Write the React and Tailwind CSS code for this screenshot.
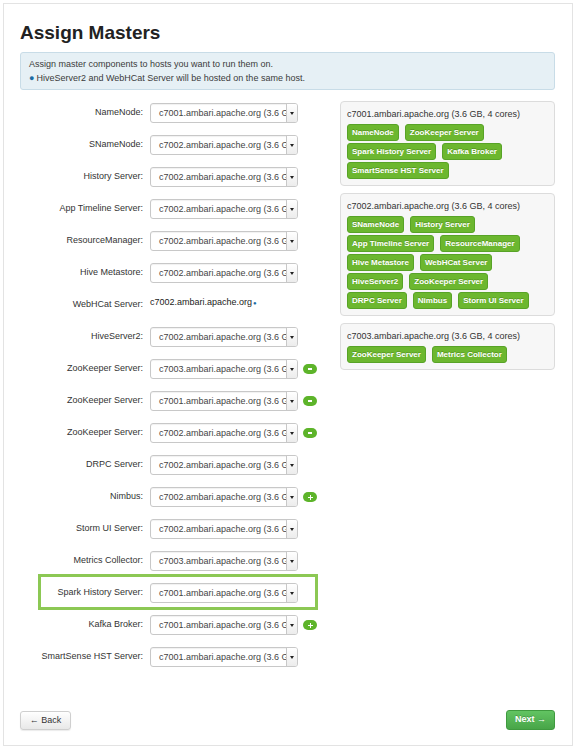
import React from 'react';

const rows = [
    { label: 'NameNode', host: 'c7001' },
    { label: 'SNameNode', host: 'c7002' },
    { label: 'History Server', host: 'c7002' },
    { label: 'App Timeline Server', host: 'c7002' },
    { label: 'ResourceManager', host: 'c7002' },
    { label: 'Hive Metastore', host: 'c7002' },
    { label: 'WebHCat Server', host: 'c7002', static: true },
    { label: 'HiveServer2', host: 'c7002' },
    { label: 'ZooKeeper Server', host: 'c7003', action: 'minus' },
    { label: 'ZooKeeper Server', host: 'c7001', action: 'minus' },
    { label: 'ZooKeeper Server', host: 'c7002', action: 'minus' },
    { label: 'DRPC Server', host: 'c7002' },
    { label: 'Nimbus', host: 'c7002', action: 'plus' },
    { label: 'Storm UI Server', host: 'c7002' },
    { label: 'Metrics Collector', host: 'c7003' },
    { label: 'Spark History Server', host: 'c7001', highlight: true },
    { label: 'Kafka Broker', host: 'c7001', action: 'plus' },
    { label: 'SmartSense HST Server', host: 'c7001' },
];

const hosts = [
    {
        name: 'c7001.ambari.apache.org (3.6 GB, 4 cores)',
        lines: [
            ['NameNode', 'ZooKeeper Server'],
            ['Spark History Server', 'Kafka Broker'],
            ['SmartSense HST Server'],
        ],
    },
    {
        name: 'c7002.ambari.apache.org (3.6 GB, 4 cores)',
        lines: [
            ['SNameNode', 'History Server'],
            ['App Timeline Server', 'ResourceManager'],
            ['Hive Metastore', 'WebHCat Server'],
            ['HiveServer2', 'ZooKeeper Server'],
            ['DRPC Server', 'Nimbus', 'Storm UI Server'],
        ],
    },
    {
        name: 'c7003.ambari.apache.org (3.6 GB, 4 cores)',
        lines: [['ZooKeeper Server', 'Metrics Collector']],
    },
];

const HostSelect = ({ host }) => (
    <div className="flex h-[20px] w-[148px] overflow-hidden rounded-[3px] border border-[#c8c8c8] bg-white shadow-[inset_0_1px_1px_rgba(0,0,0,0.06)]">
        <div className="flex-1 overflow-hidden whitespace-nowrap pl-[8px] text-[9px] leading-[18px] text-[#444]">
            {host}.ambari.apache.org (3.6 GB, 4 cores)
        </div>
        <div className="flex w-[11px] items-center justify-center border-l border-[#c8c8c8] bg-gradient-to-b from-white to-[#ececec]">
            <span className="h-0 w-0 border-x-[2px] border-t-[3px] border-x-transparent border-t-[#222]"></span>
        </div>
    </div>
);

const Pill = ({ type }) => (
    <span className="ml-[5px] flex h-[10px] w-[14px] items-center justify-center rounded-full bg-[#5db42a]">
        {type === 'minus' ? (
            <span className="h-[1.5px] w-[4px] bg-white"></span>
        ) : (
            <span className="relative block h-[5px] w-[5px]">
                <span className="absolute left-0 top-[2px] h-[1.5px] w-[5px] bg-white"></span>
                <span className="absolute left-[2px] top-0 h-[5px] w-[1.5px] bg-white"></span>
            </span>
        )}
    </span>
);

const Badge = ({ children }) => (
    <span className="flex h-[17px] items-center rounded-[3px] border border-[#58a327] bg-[#6cb72f] px-[4px] text-[8px] font-bold text-white [text-shadow:0_-1px_0_rgba(0,0,0,0.2)]">
        {children}
    </span>
);

export default function App() {
    return (
        <div className="h-[749px] w-[576px] bg-white p-[3px] font-['Liberation_Sans',Arial,sans-serif] text-[#333]">
            <div className="flex h-[743px] flex-col border border-[#e3e3e3] pl-[16px] pr-[17px] pt-[16px] pb-[15px]">
                <h1 className="text-[19px] font-bold leading-[26px] text-[#222]">Assign Masters</h1>

                <div className="mt-[6px] rounded-[3px] border border-[#c8dce7] bg-[#e6f0f5] py-[4px] pl-[8px] text-[9px] leading-[14px] text-[#3b3b3b]">
                    <div>Assign master components to hosts you want to run them on.</div>
                    <div>
                        <span className="mr-[2px] text-[#1c6ca3]">●</span>
                        HiveServer2 and WebHCat Server will be hosted on the same host.
                    </div>
                </div>

                <div className="mt-[7px] flex">
                    {/* component -> host assignments */}
                    <div className="w-[320px]">
                        {rows.map((row, i) => (
                            <div key={i} className="relative flex h-[32px] items-center">
                                {row.highlight && (
                                    <div className="pointer-events-none absolute -top-[3px] bottom-[-1px] left-[18px] w-[280px] border-[3px] border-[#8cc854]"></div>
                                )}
                                <div className="w-[123px] text-right text-[9px] text-[#333]">{row.label}:</div>
                                <div className="ml-[7px]">
                                    {row.static ? (
                                        <div className="-mt-[4px] text-[9px] text-[#222]">
                                            {row.host}.ambari.apache.org
                                            <span className="ml-[1px] text-[6px] text-[#1c6ca3]">●</span>
                                        </div>
                                    ) : (
                                        <HostSelect host={row.host} />
                                    )}
                                </div>
                                {row.action && <Pill type={row.action} />}
                            </div>
                        ))}
                    </div>

                    {/* hosts summary */}
                    <div className="mt-[4px] flex flex-1 flex-col gap-[7px]">
                        {hosts.map((h) => (
                            <div key={h.name} className="rounded-[4px] border border-[#dcdcdc] bg-[#f7f7f7] px-[6px] pt-[6px] pb-[6px]">
                                <div className="text-[9px] leading-[13px] text-[#333]">{h.name}</div>
                                <div className="mt-[3px] flex flex-col gap-[2px]">
                                    {h.lines.map((line, j) => (
                                        <div key={j} className="flex gap-[6px]">
                                            {line.map((b) => (
                                                <Badge key={b}>{b}</Badge>
                                            ))}
                                        </div>
                                    ))}
                                </div>
                            </div>
                        ))}
                    </div>
                </div>

                <div className="mt-auto flex items-end justify-between">
                    <button className="h-[19px] w-[51px] rounded-[3px] border border-[#cfcfcf] bg-gradient-to-b from-white to-[#e8e8e8] text-[9px] text-[#333] shadow-[0_1px_1px_rgba(0,0,0,0.08)]">
                        ← Back
                    </button>
                    <button className="h-[20px] w-[49px] rounded-[3px] border border-[#3f9a3f] bg-gradient-to-b from-[#62c462] to-[#48a548] text-[9px] font-bold text-white [text-shadow:0_-1px_0_rgba(0,0,0,0.2)]">
                        Next →
                    </button>
                </div>
            </div>
        </div>
    );
}
